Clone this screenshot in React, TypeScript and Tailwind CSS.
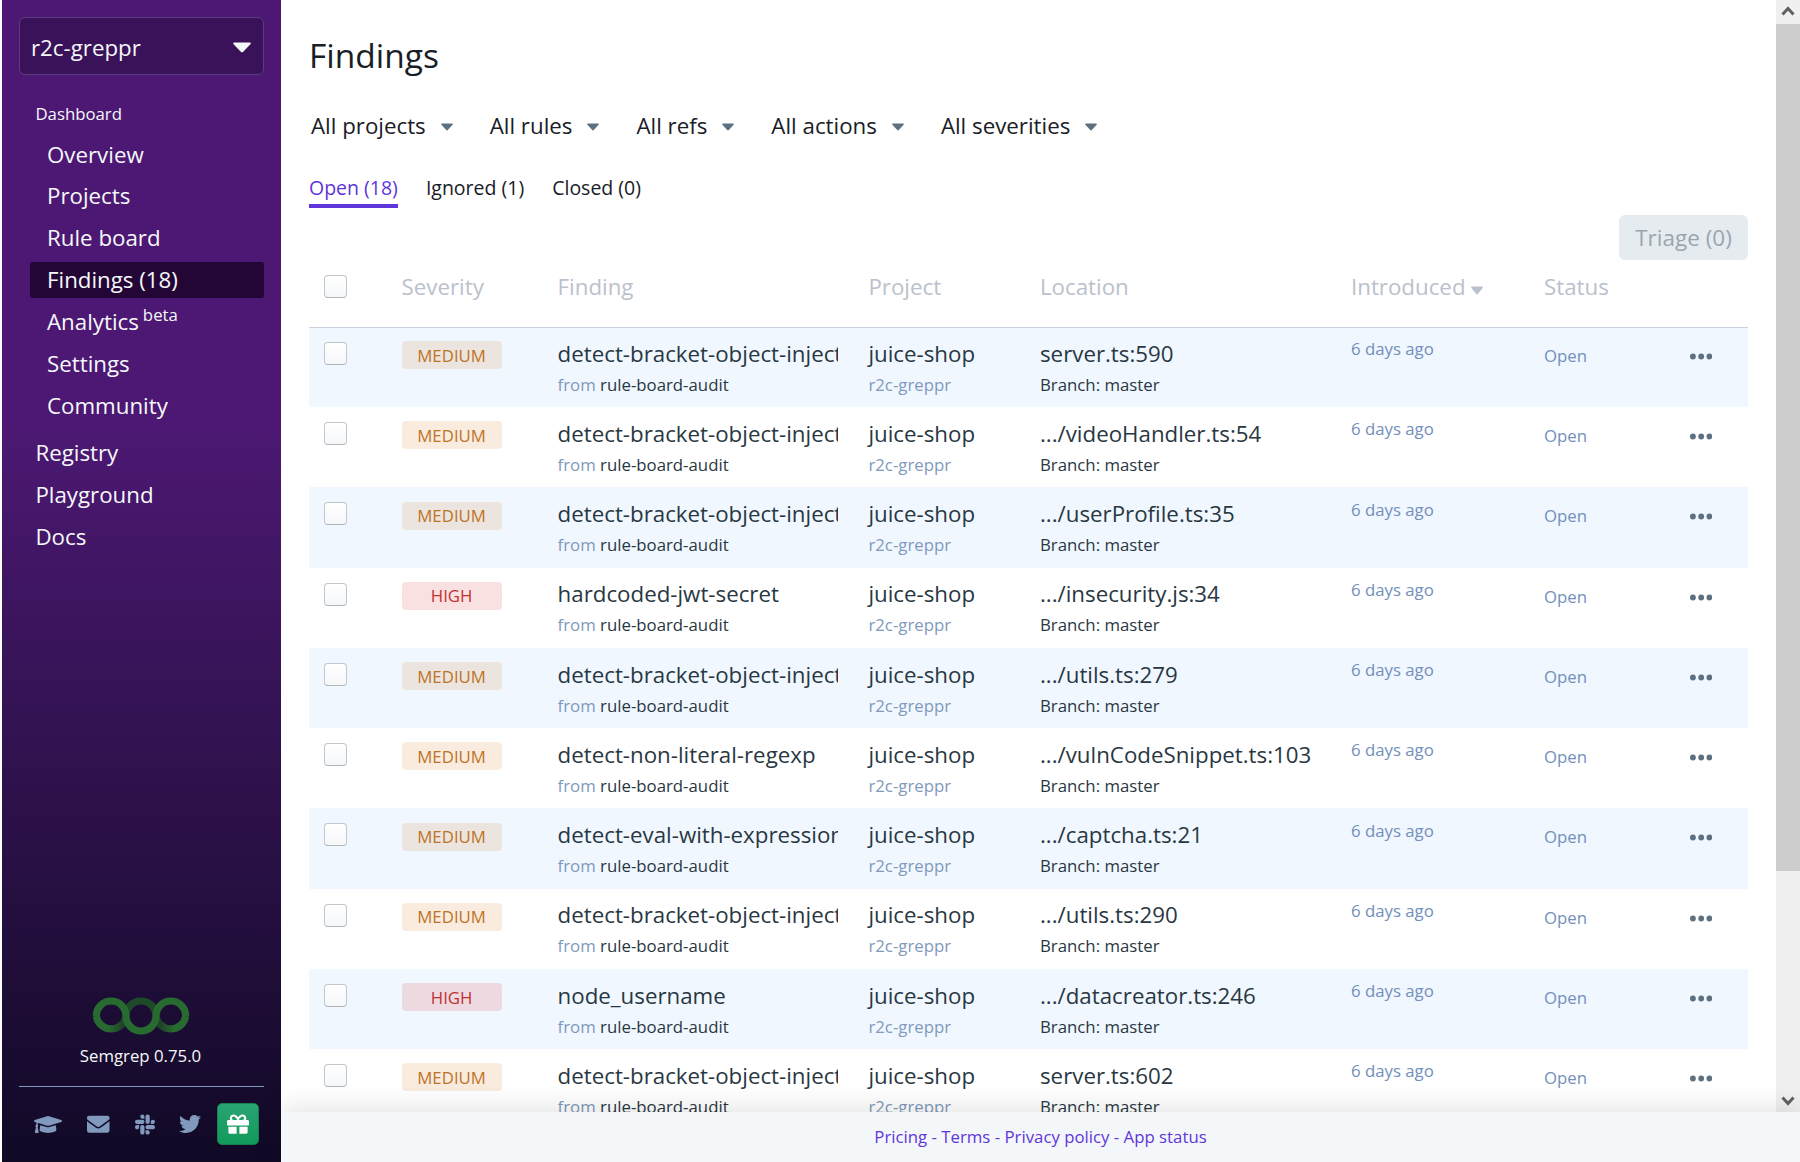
import React from "react";
import { FaGraduationCap, FaEnvelope, FaSlack, FaTwitter, FaGift } from "react-icons/fa";

type Severity = "MEDIUM" | "HIGH";
type Finding = { severity: Severity; rule: string; location: string };

const findings: Finding[] = [
  { severity: "MEDIUM", rule: "detect-bracket-object-injection", location: "server.ts:590" },
  { severity: "MEDIUM", rule: "detect-bracket-object-injection", location: ".../videoHandler.ts:54" },
  { severity: "MEDIUM", rule: "detect-bracket-object-injection", location: ".../userProfile.ts:35" },
  { severity: "HIGH", rule: "hardcoded-jwt-secret", location: ".../insecurity.js:34" },
  { severity: "MEDIUM", rule: "detect-bracket-object-injection", location: ".../utils.ts:279" },
  { severity: "MEDIUM", rule: "detect-non-literal-regexp", location: ".../vulnCodeSnippet.ts:103" },
  { severity: "MEDIUM", rule: "detect-eval-with-expression", location: ".../captcha.ts:21" },
  { severity: "MEDIUM", rule: "detect-bracket-object-injection", location: ".../utils.ts:290" },
  { severity: "HIGH", rule: "node_username", location: ".../datacreator.ts:246" },
  { severity: "MEDIUM", rule: "detect-bracket-object-injection", location: "server.ts:602" },
];

const filters = ["All projects", "All rules", "All refs", "All actions", "All severities"];
const dashboardItems = ["Overview", "Projects", "Rule board", "Findings (18)", "Analytics", "Settings", "Community"];
const columns = "grid grid-cols-[92.6px_156px_310.8px_171.6px_311px_193px_146px_58px]";

function Caret({ className }: { className: string }) {
  return (
    <svg viewBox="0 0 12 8" preserveAspectRatio="none" className={className} fill="currentColor">
      <path d="M1 .4h10c.8 0 1.1.7.6 1.3L6.8 7.1c-.5.5-1.1.5-1.6 0L.4 1.700C-.1 1.100.2.4 1 .4z" />
    </svg>
  );
}

function Checkbox() {
  return (
    <span className="block size-[23px] rounded-[4px] border border-[#c3c7cb] border-b-[#b0b5ba] bg-linear-to-b from-white to-[#f5f7f9]" />
  );
}

function Logo() {
  return (
    <svg viewBox="0 0 98 38" className="h-[38px] w-[98px]" fill="none" strokeWidth="7.2">
      <defs>
        <linearGradient id="left" x1="4" x2="34" y1="0" y2="0" gradientUnits="userSpaceOnUse">
          <stop offset="0.4" stopColor="#276b30" />
          <stop offset="0.85" stopColor="#1f4429" />
        </linearGradient>
        <linearGradient id="right" x1="64" x2="94" y1="0" y2="0" gradientUnits="userSpaceOnUse">
          <stop offset="0.15" stopColor="#1f4429" />
          <stop offset="0.6" stopColor="#276b30" />
        </linearGradient>
      </defs>
      <path d="M4.300 19a15 15 0 0 0 29.700 0" stroke="url(#left)" />
      <path d="M64 19a15 15 0 0 0 29.700 0" stroke="url(#right)" />
      <path d="M34 19a15 15 0 0 1 30 0" stroke="#1f4a2a" />
      <path d="M4.300 19a14.850 15 0 0 1 29.700 0a15 15 0 0 0 30 0a14.850 15 0 0 1 29.700 0" stroke="#276b30" />
    </svg>
  );
}

function Sidebar() {
  return (
    <aside className="flex w-[279px] shrink-0 flex-col bg-linear-to-b from-[#4c1873] from-[37%] to-[#110926] px-[17px] text-[#f5f8fa]">
      <div className="mt-[17px] flex h-[58px] items-center justify-between rounded-[6px] border border-[#5e3b7d] bg-[#3a1259] pr-[12px] pl-[11px]">
        <span className="pt-[3px] leading-[30px]">r2c-greppr</span>
        <Caret className="mt-[3px] h-[11px] w-[18px]" />
      </div>
      <nav className="mt-[27px] flex flex-col pl-[11px]">
        <div className="pl-[5.4px] text-[16.8px] leading-[24px]">Dashboard</div>
        <div className="mt-[10px] flex flex-col gap-1.5">
          {dashboardItems.map((item) => (
            <a
              key={item}
              className={
                item === "Findings (18)"
                  ? "flex h-9 items-center rounded-[3px] bg-[#240636] pl-[17px]"
                  : "flex h-9 items-center pl-[17px] first:pt-[2px]"
              }
            >
              {item}
              {item === "Analytics" && <sup className="top-[-7px] ml-[4px] text-[16.8px] leading-none">beta</sup>}
            </a>
          ))}
        </div>
        <div className="mt-[11px] flex flex-col gap-1.5 pl-[5.4px]">
          <a className="flex h-9 items-center">Registry</a>
          <a className="flex h-9 items-center">Playground</a>
          <a className="flex h-9 items-center">Docs</a>
        </div>
      </nav>
      <div className="mt-auto flex flex-col items-center pr-[2px]">
        <Logo />
        <div className="mt-2 text-[16.8px] leading-[26px]">Semgrep 0.75.0</div>
      </div>
      <div className="mt-[17px] mb-[17px] flex items-center border-t border-[#8199bc] pt-4 pl-[15px] text-[#8199bc]">
        <FaGraduationCap className="h-[23px] w-[28px]" />
        <FaEnvelope className="ml-[25px] size-[22.5px]" />
        <FaSlack className="ml-[25px] h-[23px] w-[20px]" />
        <FaTwitter className="ml-[24px] size-[22px]" />
        <span className="mr-[5px] ml-auto flex size-[42px] items-center justify-center rounded-[5px] border border-[#17804f] bg-linear-to-b from-[#29a373] to-[#109a5b] text-white">
          <FaGift className="size-[22px]" />
        </span>
      </div>
    </aside>
  );
}

function FindingRow({ finding, striped }: { finding: Finding; striped: boolean }) {
  return (
    <div
      className={`${columns} h-[80.25px] shrink-0 ${striped ? "bg-[#f0f7ff]" : "bg-white"} first:shadow-[inset_0_1px_0_#c8d1dc]`}
    >
      <div className="pt-[15.2px] pl-[15px]">
        <Checkbox />
      </div>
      <div className="pt-[14.4px]">
        <span
          className={
            finding.severity === "HIGH"
              ? "flex h-7 w-[100px] items-center justify-center rounded-[4px] bg-[#db3737]/15 pt-px text-[16.8px] text-[#c23030]"
              : "flex h-7 w-[100px] items-center justify-center rounded-[4px] bg-[#d9822b]/15 pt-px text-[16.8px] text-[#bf7326]"
          }
        >
          {finding.severity}
        </span>
      </div>
      <div className="w-[280.4px] overflow-hidden pt-[11.8px] whitespace-nowrap">
        <div className="leading-[30px]">{finding.rule}</div>
        <div className="text-[16.8px] leading-[32.4px] text-[#8199bc]">
          from <span className="text-[#293742]">rule-board-audit</span>
        </div>
      </div>
      <div className="pt-[11.8px]">
        <div className="leading-[30px]">juice-shop</div>
        <div className="text-[16.8px] leading-[32.4px] text-[#8199bc]">r2c-greppr</div>
      </div>
      <div className="pt-[11.8px]">
        <div className="leading-[30px]">{finding.location}</div>
        <div className="text-[16.8px] leading-[32.4px]">Branch: master</div>
      </div>
      <div className="pt-[10.3px] text-[16.8px] leading-[24px] text-[#738fbb]">6 days ago</div>
      <div className="pt-[17px] text-[16.8px] leading-[24px] text-[#738fbb]">Open</div>
      <div className="pt-[26px]">
        <svg viewBox="0 0 22 7" className="h-[7px] w-[22px] text-[#5c7080]" fill="currentColor">
          <circle cx="2.900" cy="3.500" r="2.900" />
          <circle cx="11.200" cy="3.500" r="2.900" />
          <circle cx="19.400" cy="3.500" r="2.900" />
        </svg>
      </div>
    </div>
  );
}

function Scrollbar() {
  return (
    <div className="flex w-6 shrink-0 flex-col bg-[#f0f0f0] text-[#606060]">
      <svg viewBox="0 0 24 24" className="size-6" fill="none" stroke="currentColor" strokeWidth="3">
        <path d="M6.500 14.500 12 8.500l5.500 6" />
      </svg>
      <div className="h-[847px] bg-[#cdcdcd]" />
      <svg viewBox="0 0 24 24" className="mt-auto size-6" fill="none" stroke="currentColor" strokeWidth="3">
        <path d="M6.500 9.500 12 15.500l5.500-6" />
      </svg>
    </div>
  );
}

export default function App() {
  return (
    <div className="flex h-[1162px] w-[1800px] overflow-hidden bg-white pl-[2px] font-['Open_Sans',sans-serif] text-[22.3px] leading-[30px] text-[#293742]">
      <Sidebar />
      <div className="flex min-w-0 flex-1 flex-col">
        <div className="flex min-h-0 flex-1">
          <main className="flex min-w-0 flex-1 flex-col overflow-hidden pr-7 pl-7 text-[#293742]">
            <h1 className="mt-[33px] text-[33.5px] leading-[44px] text-[#182026]">Findings</h1>
            <div className="mt-[34px] flex gap-[37px] pl-[2px] text-[#182026]">
              {filters.map((label) => (
                <button key={label} className="flex items-center gap-[15px]">
                  {label}
                  <Caret className="mt-px h-[8px] w-[12px] text-[#5c7080]" />
                </button>
              ))}
            </div>
            <div className="mt-[32px] flex gap-7 text-[19.5px] text-[#182026]">
              <div className="h-[35px] border-b-4 border-[#6035da] text-[#6035da]">Open (18)</div>
              <div>Ignored (1)</div>
              <div>Closed (0)</div>
            </div>
            <button className="mt-[7px] flex h-[45px] w-[129px] shrink-0 items-center justify-center self-end rounded-[6px] bg-[#e6ebef] text-[22.5px] text-[#9aa6af]">
              Triage (0)
            </button>
            <div className={`${columns} h-[66.8px] shrink-0 pt-[12px] text-[#bac1cc]`}>
              <div className="pt-[3px] pl-[15px]">
                <Checkbox />
              </div>
              <div>Severity</div>
              <div>Finding</div>
              <div>Project</div>
              <div>Location</div>
              <div className="flex h-[30px] items-center gap-[5px]">
                Introduced
                <Caret className="mt-[7px] h-[9px] w-[12px]" />
              </div>
              <div>Status</div>
            </div>
            <div className="flex flex-col">
              {findings.map((finding, index) => (
                <FindingRow key={index} finding={finding} striped={index % 2 === 0} />
              ))}
            </div>
          </main>
          <Scrollbar />
        </div>
        <footer className="relative flex h-[50px] shrink-0 items-center justify-center bg-[#f4f7fa] text-[16.8px] text-[#6035da] shadow-[0_0_30px_rgba(0,0,0,0.15)]">
          Pricing - Terms - Privacy policy - App status
        </footer>
      </div>
    </div>
  );
}
